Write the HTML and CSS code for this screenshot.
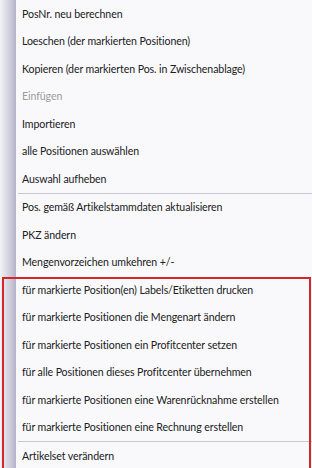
FILE: index.html
```html
<!DOCTYPE html>
<html lang="de">

<head>
    <meta charset="UTF-8">
    <meta name="viewport" content="width=device-width, initial-scale=1.0">
    <title>Kontextmenü</title>
    <link rel="stylesheet" href="styles.css">
</head>

<body>
    <div class="menu">
        <div class="item">PosNr. neu berechnen</div>
        <div class="item">Loeschen (der markierten Positionen)</div>
        <div class="item">Kopieren (der markierten Pos. in Zwischenablage)</div>
        <div class="item disabled">Einfügen</div>
        <div class="item">Importieren</div>
        <div class="item">alle Positionen auswählen</div>
        <div class="item">Auswahl aufheben</div>
        <div class="separator"></div>
        <div class="item">Pos. gemäß Artikelstammdaten aktualisieren</div>
        <div class="item">PKZ ändern</div>
        <div class="item">Mengenvorzeichen umkehren +/-</div>
        <div class="item">für markierte Position(en) Labels/Etiketten drucken</div>
        <div class="item">für markierte Positionen die Mengenart ändern</div>
        <div class="item">für markierte Positionen ein Profitcenter setzen</div>
        <div class="item">für alle Positionen dieses Profitcenter übernehmen</div>
        <div class="item">für markierte Positionen eine Warenrücknahme erstellen</div>
        <div class="item">für markierte Positionen eine Rechnung erstellen</div>
        <div class="separator"></div>
        <div class="item">Artikelset verändern</div>

        <!-- annotation frame -->
        <div class="highlight"></div>
    </div>
</body>

</html>
```

FILE: styles.css
```css
* {
    box-sizing: border-box;
}

body {
    margin: 0;
    background-color: #f9f9fc;
    overflow: hidden;
}

.menu {
    position: relative;
    width: 312px;
    height: 468px;
    display: flex;
    flex-direction: column;
    font-family: "Segoe UI", Lato, sans-serif;
    font-size: 10.6px;
    letter-spacing: -0.1px;
    color: #202020;
    background: linear-gradient(to right, #f3f3f8 0, #c9c9d9 11px, #b3b3c8 16px, #f9f9fc 16px, #f9f9fc 100%);
}

.item {
    height: 27.5px;
    flex-shrink: 0;
    display: flex;
    align-items: center;
    padding-left: 22px;
    white-space: nowrap;
}

.item.disabled {
    color: #9a9a9a;
}

.separator {
    height: 1px;
    flex-shrink: 0;
    margin-left: 18px;
    background-color: #c8c8d2;
}

.highlight {
    position: absolute;
    left: 2px;
    top: 277px;
    width: 309px;
    height: 200px;
    border: 2px solid #d6262c;
    pointer-events: none;
}
```
